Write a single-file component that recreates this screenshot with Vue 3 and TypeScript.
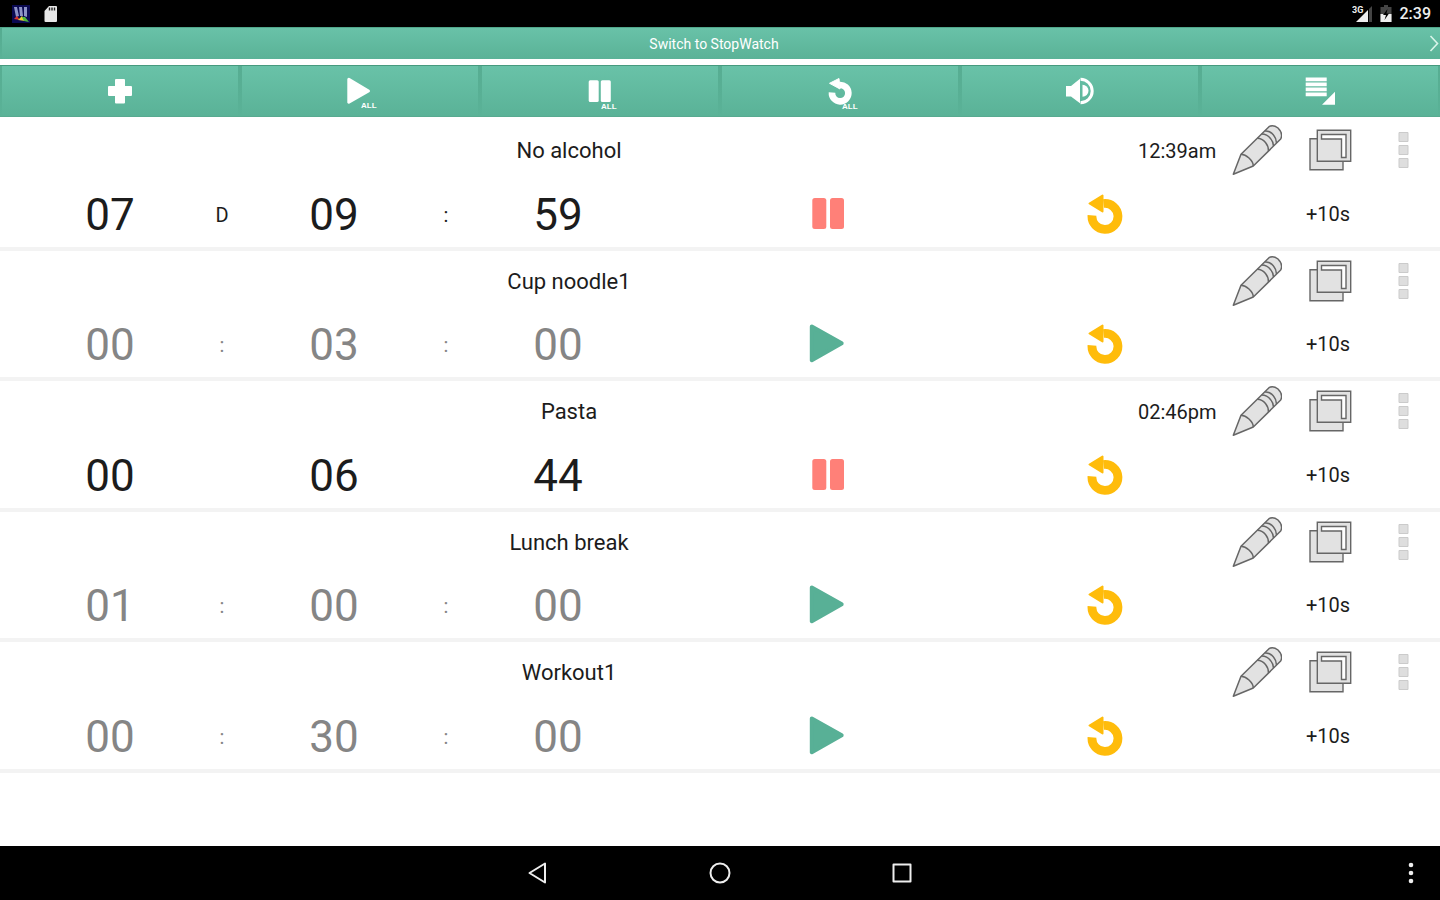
<script setup lang="ts">
import { ref } from 'vue'

interface Timer {
  id: number
  name: string
  parts: string[]
  separators: string[]
  running: boolean
  endsAt: string
}

const timers = ref<Timer[]>([
  { id: 1, name: 'No alcohol', parts: ['07', '09', '59'], separators: ['D', ':'], running: true, endsAt: '12:39am' },
  { id: 2, name: 'Cup noodle1', parts: ['00', '03', '00'], separators: [':', ':'], running: false, endsAt: '' },
  { id: 3, name: 'Pasta', parts: ['00', '06', '44'], separators: ['', ''], running: true, endsAt: '02:46pm' },
  { id: 4, name: 'Lunch break', parts: ['01', '00', '00'], separators: [':', ':'], running: false, endsAt: '' },
  { id: 5, name: 'Workout1', parts: ['00', '30', '00'], separators: [':', ':'], running: false, endsAt: '' },
])

function toggle(timer: Timer) {
  timer.running = !timer.running
}

function setAll(running: boolean) {
  timers.value.forEach((timer) => { timer.running = running })
}
</script>

<template>
  <div class="screen">
    <header class="status">
      <div class="status-group">
        <svg width="18" height="18" viewBox="0 0 18 18" aria-hidden="true">
          <rect width="18" height="18" fill="#0b0a52" />
          <path d="M2 2l3 0 2 9-3 1zM7 2l3 0 1 9-3 0zM12 2l3 0 0 10-3-1z" fill="#8d93c8" />
          <path d="M2 14l3-3 3 4z" fill="#d8342f" />
          <path d="M6 15l4-4 3 5z" fill="#e6d030" />
          <path d="M10 12l3 0 4 5-5-1z" fill="#4fb83c" />
        </svg>
        <svg width="14" height="18" viewBox="0 0 14 18" aria-hidden="true">
          <path d="M5 1H12Q13 1 13 2V16Q13 17 12 17H1.500Q.5 17 .5 16V6z" fill="#e8e8e8" />
          <path d="M5.500 2.500v3M8 2.500v3M10.500 2.500v3" stroke="#222" stroke-width="1.400" />
        </svg>
      </div>
      <div class="status-group">
        <svg width="20" height="18" viewBox="0 0 20 18" aria-hidden="true">
          <text x="0" y="8" class="net">3G</text>
          <path d="M4 17L16 5V17z" fill="#eee" />
          <path d="M17 4L20 1V17H17z" fill="#444" />
        </svg>
        <svg width="12" height="18" viewBox="0 0 12 18" aria-hidden="true">
          <path d="M4 0H8V2H11.500V17H.5V2H4z" fill="#444" />
          <path d="M.5 9H11.500V17H.5z" fill="#eee" />
          <path d="M7.500 4L3 10H6L4.500 15L9 8.500H6.500z" fill="#000" />
        </svg>
        <time class="clock">2:39</time>
      </div>
    </header>

    <button class="switch" type="button">
      <span class="switch-label">Switch to StopWatch</span>
      <svg width="12" height="18" viewBox="0 0 12 18" aria-hidden="true">
        <path d="M2.500 1L9.500 8.500L2.500 16" fill="none" stroke="#d9f5ea" stroke-width="1.600" />
      </svg>
    </button>

    <nav class="toolbar">
      <button class="tool" type="button" aria-label="Add timer">
        <svg viewBox="0 0 40 40"><path d="M16 8H24Q25 8 25 9V15H31Q32 15 32 16V24Q32 25 31 25H25V31.500Q25 32.500 24 32.500H16Q15 32.500 15 31.500V25H9Q8 25 8 24V16Q8 15 9 15H15V9Q15 8 16 8z" /></svg>
      </button>
      <button class="tool" type="button" aria-label="Start ALL" @click="setAll(true)">
        <svg viewBox="0 0 40 40">
          <path d="M8.800 8.200L28.500 20L8.800 31.200z" stroke="#fff" stroke-width="3" stroke-linejoin="round" />
          <text x="21" y="37">ALL</text>
        </svg>
      </button>
      <button class="tool" type="button" aria-label="Pause ALL" @click="setAll(false)">
        <svg viewBox="0 0 40 40">
          <rect x="8.700" y="9.300" width="10" height="21.700" rx="1.500" />
          <rect x="20.800" y="9.300" width="10" height="21.700" rx="1.500" />
          <text x="21" y="38">ALL</text>
        </svg>
      </button>
      <button class="tool" type="button" aria-label="Reset ALL">
        <svg viewBox="0 0 40 40">
          <path d="M12 21.500A8.200 8.200 0 1 0 19.500 14" fill="none" stroke="#fff" stroke-width="6.600" />
          <path d="M9.500 12.300L19 7.500L20 18z" stroke="#fff" stroke-linejoin="round" />
          <text x="22" y="38">ALL</text>
        </svg>
      </button>
      <button class="tool" type="button" aria-label="Sound">
        <svg viewBox="0 0 40 40">
          <path d="M6 15H11L20 7.800V32.300L11 25.500H6z" />
          <path d="M22.500 13.800A6 6 0 0 1 22.500 25.800z" />
          <path d="M22.500 8.300A11.700 11.700 0 0 1 22.500 31.700" fill="none" stroke="#fff" stroke-width="3" transform="translate(-2 0)" />
        </svg>
      </button>
      <button class="tool" type="button" aria-label="List menu">
        <svg viewBox="0 0 40 40">
          <path d="M5.700 6.500H26.700V10.200H5.700zM5.700 11.500H26.700V15.200H5.700zM5.700 16.500H26.700V20.200H5.700zM5.700 21.500H26.700V25.200H5.700z" />
          <path d="M35 20.700V33.700H22z" />
        </svg>
      </button>
    </nav>

    <main class="timers">
      <article v-for="timer in timers" :key="timer.id" class="timer" :class="{ idle: !timer.running }">
        <div class="head">
          <h2 class="name">{{ timer.name }}</h2>
          <time class="ends">{{ timer.endsAt }}</time>
          <button type="button" class="icon" aria-label="Edit">
            <svg width="50" height="52" viewBox="0 0 50 52" fill="#e2e2e2" stroke="#666" stroke-width="1.500" stroke-linejoin="round">
              <path d="M1.300 50.300L9 30.300L37 2.700Q41 .2 46 4Q51.500 9.500 48.700 15L21.300 42z" />
              <path d="M9 30.300Q13 30.300 17 34Q21.300 38 21.300 42M33 7Q38 6.500 41.500 11Q44.500 14.500 44.500 19M29.700 10Q35 10 38.500 14.500Q41.500 18 41.500 22M25.300 14.300Q30 14.500 33.500 18.500Q36.500 22 36.500 27" fill="none" />
            </svg>
          </button>
          <button type="button" class="icon" aria-label="Duplicate">
            <svg width="44" height="42" viewBox="0 0 44 42" fill="#e2e2e2" stroke="#666" stroke-width="1.400">
              <path d="M2 9.700H35V40.700H2z" />
              <path d="M9.300 1.300H42.700V32.300H9.300z" />
              <path d="M13.500 5.500H38V28.500H33.500V10H13.500z" fill="#fff" />
            </svg>
          </button>
          <button type="button" class="icon" aria-label="More">
            <svg width="16" height="40" viewBox="0 0 16 40" fill="#dedede" stroke="#cbcbcb">
              <path d="M6 2.500H15V11.500H6zM6 15.500H15V24.500H6zM6 28.500H15V37.500H6z" />
            </svg>
          </button>
        </div>
        <div class="body">
          <span class="digits first">{{ timer.parts[0] }}</span>
          <span class="sep">{{ timer.separators[0] }}</span>
          <span class="digits">{{ timer.parts[1] }}</span>
          <span class="sep">{{ timer.separators[1] }}</span>
          <span class="digits">{{ timer.parts[2] }}</span>
          <button type="button" class="icon toggle" :aria-label="timer.running ? 'Pause' : 'Start'" @click="toggle(timer)">
            <svg v-if="timer.running" width="40" height="40" viewBox="0 0 40 40" fill="#ff8078">
              <rect x="4.300" y="4" width="14" height="31" rx="2.500" />
              <rect x="22" y="4" width="14" height="31" rx="2.500" />
            </svg>
            <svg v-else width="40" height="40" viewBox="0 0 40 40" fill="#58b096" stroke="#58b096" stroke-width="4" stroke-linejoin="round">
              <path d="M3.800 2.500L33.700 19.300L3.800 36.200z" />
            </svg>
          </button>
          <button type="button" class="icon" aria-label="Reset">
            <svg width="36" height="40" viewBox="0 0 36 40">
              <path d="M5 21.300A13 13 0 1 0 16.500 9.500" fill="none" stroke="#ffbc0b" stroke-width="8.800" />
              <path d="M2.500 9.500L15.500 1.500V17.500z" fill="#ffbc0b" stroke="#ffbc0b" stroke-width="2" stroke-linejoin="round" />
            </svg>
          </button>
          <button type="button" class="add">+10s</button>
        </div>
      </article>
    </main>

    <footer class="system">
      <button type="button" class="icon" aria-label="Back">
        <svg width="24" height="24" viewBox="0 0 24 24"><path d="M3.500 12L19 2.500V21.500z" /></svg>
      </button>
      <button type="button" class="icon" aria-label="Home">
        <svg width="24" height="24" viewBox="0 0 24 24"><circle cx="12" cy="12" r="9.500" /></svg>
      </button>
      <button type="button" class="icon" aria-label="Recent apps">
        <svg width="24" height="24" viewBox="0 0 24 24"><path d="M3.500 3.500H20.500V20.500H3.500z" /></svg>
      </button>
      <button type="button" class="icon overflow" aria-label="Options">
        <svg class="dots" width="6" height="24" viewBox="0 0 6 24">
          <circle cx="3" cy="4" r="2.300" /><circle cx="3" cy="12" r="2.300" /><circle cx="3" cy="20" r="2.300" />
        </svg>
      </button>
    </footer>
  </div>
</template>

<style>
body {
  margin: 0;
}
</style>

<style scoped>
.screen {
  display: flex;
  flex-direction: column;
  min-height: 100vh;
  background: #fff;
  color: #1c1c1c;
  font-family: Roboto, "Liberation Sans", sans-serif;
}

button {
  border: 0;
  padding: 0;
  margin: 0;
  background: none;
  color: inherit;
  font: inherit;
  cursor: pointer;
}

svg {
  display: block;
}

.status {
  display: flex;
  justify-content: space-between;
  align-items: center;
  height: 27px;
  padding: 0 9px 0 12px;
  background: #000;
}

.status-group {
  display: flex;
  align-items: center;
  gap: 8px;
}

.status-group:first-child {
  gap: 14px;
}

.net {
  fill: #eee;
  font-size: 9px;
  font-weight: 700;
}

.clock {
  color: #eee;
  font-size: 16px;
  font-weight: 500;
  line-height: 20px;
}

.switch {
  display: flex;
  align-items: center;
  height: 32px;
  margin-bottom: 6px;
  box-sizing: border-box;
  border-top: 1px solid #51a78b;
  background:
    linear-gradient(#55ab90, #5ab297) left / 2px 100% no-repeat,
    linear-gradient(#69c2a8, #5ab297);
  color: #fff;
}

.switch-label {
  flex: 1;
  font-size: 14px;
  line-height: 20px;
}

.toolbar {
  display: grid;
  grid-template-columns: repeat(6, minmax(0, 1fr));
}

.tool {
  display: flex;
  justify-content: center;
  align-items: center;
  height: 52px;
  box-sizing: border-box;
  border-top: 1px solid #469a7e;
  border-bottom: 1px solid #58aa90;
  background:
    linear-gradient(#57ad92, #5ab297) left / 2px 100% no-repeat,
    linear-gradient(#57ad92, #5ab297) right / 2px 100% no-repeat,
    linear-gradient(#69c2a8, #5ab297);
}

.tool svg {
  width: 40px;
  height: 40px;
  fill: #fff;
}

.tool text {
  font-family: "Liberation Sans", sans-serif;
  font-size: 8px;
  font-weight: 700;
}

.timers {
  flex: 1;
  padding-top: 3px;
}

.timer {
  border-bottom: 4px solid #f3f3f3;
}

.head {
  display: grid;
  grid-template-columns: minmax(0, 1fr) 78px 82px 64px 78px;
  align-items: center;
  height: 60px;
}

.timer:nth-child(even) .head {
  height: 59px;
}

.name {
  margin: 0;
  padding-top: 2px;
  font-size: 22px;
  font-weight: 400;
  line-height: 28px;
  text-align: center;
}

.ends {
  padding-top: 2px;
  font-size: 20px;
  line-height: 24px;
  text-align: right;
  white-space: nowrap;
}

.icon {
  display: flex;
  justify-content: center;
  align-items: center;
}

.body {
  display: grid;
  grid-template-columns: 54fr repeat(5, 112fr) 76fr 276fr 277fr 170fr 27fr;
  align-items: center;
  height: 67px;
}

.digits,
.sep {
  padding-top: 2px;
  text-align: center;
}

.digits {
  font-size: 44px;
  line-height: 52px;
}

.first {
  grid-column: 2;
}

.sep {
  font-size: 20px;
  line-height: 24px;
}

.idle .digits,
.idle .sep {
  color: #858585;
}

.toggle {
  grid-column: 8;
}

.add {
  font-size: 20px;
  line-height: 24px;
}

.system {
  display: grid;
  grid-template-columns: 1fr repeat(3, 182px) 1fr;
  align-items: center;
  height: 54px;
  background: #000;
}

.system .icon:first-child {
  grid-column: 2;
}

.system svg {
  fill: none;
  stroke: #eee;
  stroke-width: 2;
  stroke-linejoin: round;
}

.system .dots {
  fill: #eee;
  stroke: none;
}

.overflow {
  justify-self: end;
  margin-right: 26px;
}
</style>
